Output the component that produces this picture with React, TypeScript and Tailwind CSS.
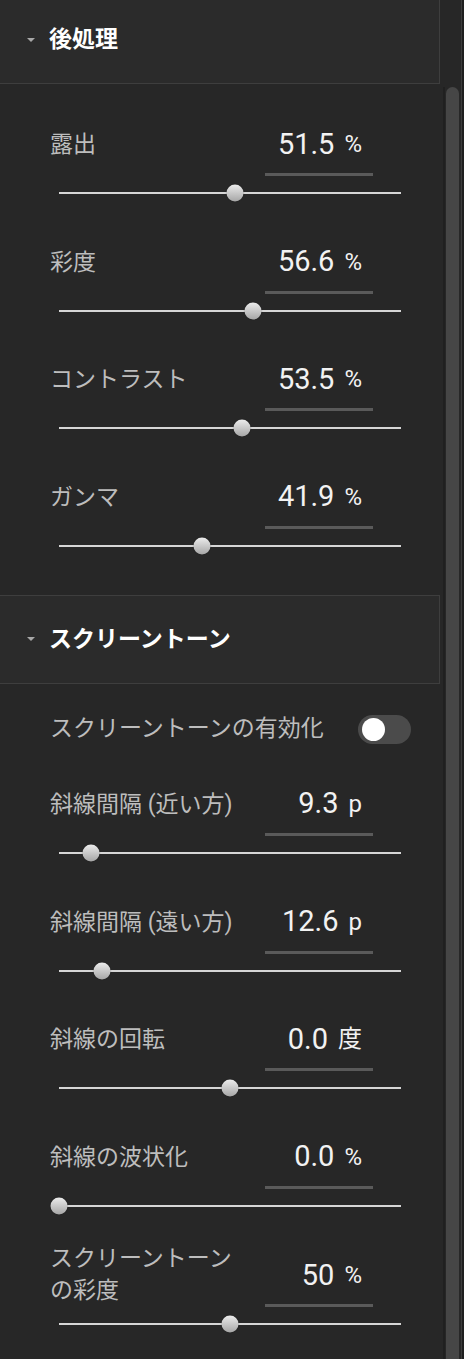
import React from 'react';

type Row = {
  label: string[];
  value: string;
  unit: string;
  pct: number;
};

const postRows: Row[] = [
  { label: ['露出'], value: '51.5', unit: '%', pct: 51.5 },
  { label: ['彩度'], value: '56.6', unit: '%', pct: 56.6 },
  { label: ['コントラスト'], value: '53.5', unit: '%', pct: 53.5 },
  { label: ['ガンマ'], value: '41.9', unit: '%', pct: 41.9 },
];

const toneRows: Row[] = [
  { label: ['斜線間隔 (近い方)'], value: '9.3', unit: 'p', pct: 9.3 },
  { label: ['斜線間隔 (遠い方)'], value: '12.6', unit: 'p', pct: 12.6 },
  { label: ['斜線の回転'], value: '0.0', unit: '度', pct: 50 },
  { label: ['斜線の波状化'], value: '0.0', unit: '%', pct: 0 },
  { label: ['スクリーントーン', 'の彩度'], value: '50', unit: '%', pct: 50 },
];

function SectionHeader({ title, first }: { title: string; first?: boolean }) {
  return (
    <div
      className={`flex h-[89px] w-[440px] shrink-0 items-center border-t border-r border-b border-[#3e3e3e] bg-[#2b2b2b] ${
        first ? '-mt-[5px]' : ''
      }`}
    >
      <span className="ml-[27px] h-0 w-0 border-t-[4px] border-r-[4px] border-l-[4px] border-r-transparent border-l-transparent border-t-[#a8a8a8]" />
      <span className="ml-[14px] text-[23px] font-bold leading-none text-white">{title}</span>
    </div>
  );
}

function SliderRow({ row }: { row: Row }) {
  const tall = row.label.length > 1;
  return (
    <div className={`flex shrink-0 flex-col ${tall ? 'pt-[29px]' : 'h-[117.6px] pt-[37px]'}`}>
      <div className={`flex pl-[50px] pr-[70px] ${tall ? 'items-end' : 'items-start'}`}>
        <div className={`flex flex-1 flex-col justify-center text-[23px] leading-[32px] text-[#bdbdbd] ${tall ? '' : 'h-[48px]'}`}>
          {row.label.map((l) => (
            <div key={l}>{l}</div>
          ))}
        </div>
        <div className="flex w-[108px] flex-col">
          <div className="flex h-[46px] items-center justify-end pr-[11px] text-[#f2f2f2]">
            <span className="text-[29px] leading-none">{row.value}</span>
            <span className="ml-[10px] text-[24px] leading-none">{row.unit}</span>
          </div>
          <div className="mt-[6px] h-[3px] bg-[#5a5a5a]" />
        </div>
      </div>
      <div className="relative mt-[9px] ml-[59px] flex h-[16px] w-[342px] items-center">
        <div className="h-[2px] w-full bg-[#d6d6d6]" />
        <div
          className="absolute top-1/2 h-[17px] w-[17px] -translate-x-1/2 -translate-y-1/2 rounded-full bg-linear-to-b from-[#ececec] to-[#a6a6a6] shadow-[0_0_1px_rgba(0,0,0,0.6)]"
          style={{ left: `${row.pct}%` }}
        />
      </div>
    </div>
  );
}

export default function App() {
  return (
    <div
      className="flex h-[1359px] w-[464px] overflow-hidden bg-[#272727]"
      style={{ fontFamily: "Roboto, 'Noto Sans CJK JP', sans-serif" }}
    >
      <div className="flex w-[443px] flex-col">
        <SectionHeader title="後処理" first />
        {postRows.map((r) => (
          <SliderRow key={r.label.join('')} row={r} />
        ))}
        <div className="h-[40.6px] shrink-0" />
        <SectionHeader title="スクリーントーン" />
        <div className="flex h-[60px] shrink-0 items-start pt-[31px] pl-[50px] pr-[32px]">
          <div className="flex h-[29px] flex-1 items-center text-[23px] text-[#bdbdbd]">スクリーントーンの有効化</div>
          <div className="flex h-[29px] w-[53px] items-center rounded-full bg-[#4b4b4b] pl-[4px]">
            <div className="h-[23px] w-[23px] rounded-full bg-white" />
          </div>
        </div>
        {toneRows.map((r) => (
          <SliderRow key={r.label.join('')} row={r} />
        ))}
      </div>
      <div className="flex w-[21px] shrink-0">
        <div className="flex w-[18px] flex-col">
          <div className="h-[87px] shrink-0" />
          <div className="flex flex-1 border-l-2 border-[#202020] pl-[1px]">
            <div className="w-[13px] rounded-t-full bg-[#464646]" />
          </div>
        </div>
        <div className="w-[1px] bg-[#3c3c3c]" />
        <div className="w-[2px] bg-[#1f1f1f]" />
      </div>
    </div>
  );
}
